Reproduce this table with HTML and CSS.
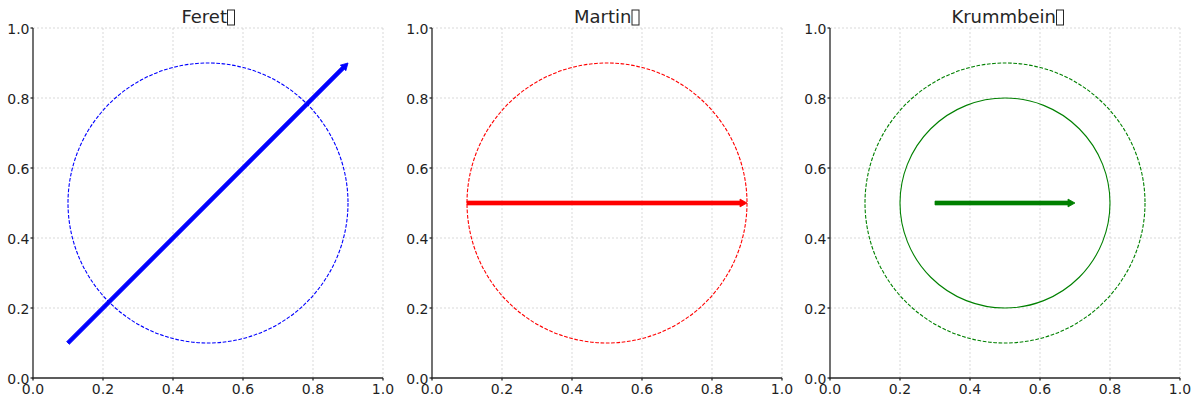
FILE: index.html
```html
<!DOCTYPE html>
<html>
<head>
<meta charset="utf-8">
<link rel="stylesheet" href="styles.css">
</head>
<body>
<div class="figure">
  <div class="panel">
    <svg class="plot" viewBox="0 0 398.5 404" width="398.5" height="404">
      <g class="grid">
        <line x1="103" y1="28" x2="103" y2="378"/><line x1="173" y1="28" x2="173" y2="378"/><line x1="243" y1="28" x2="243" y2="378"/><line x1="313" y1="28" x2="313" y2="378"/><line x1="383" y1="28" x2="383" y2="378"/>
        <line x1="33" y1="308" x2="383" y2="308"/><line x1="33" y1="238" x2="383" y2="238"/><line x1="33" y1="168" x2="383" y2="168"/><line x1="33" y1="98" x2="383" y2="98"/><line x1="33" y1="28" x2="383" y2="28"/>
      </g>
      <circle class="dash blue" cx="208" cy="203" r="140"/>
      <polygon class="fill-blue" transform="translate(68 343) rotate(-45)" points="0,-1.9 389,-1.9 389,-3.9 396,0 389,3.9 389,1.9 0,1.9"/>
      <g class="axes">
        <line x1="33" y1="28" x2="33" y2="378.6"/><line x1="32.4" y1="378" x2="383" y2="378"/>
        <line x1="30.5" y1="28" x2="33" y2="28"/><line x1="30.5" y1="98" x2="33" y2="98"/><line x1="30.5" y1="168" x2="33" y2="168"/><line x1="30.5" y1="238" x2="33" y2="238"/><line x1="30.5" y1="308" x2="33" y2="308"/><line x1="30.5" y1="378" x2="33" y2="378"/>
        <line x1="33" y1="378" x2="33" y2="380.5"/><line x1="103" y1="378" x2="103" y2="380.5"/><line x1="173" y1="378" x2="173" y2="380.5"/><line x1="243" y1="378" x2="243" y2="380.5"/><line x1="313" y1="378" x2="313" y2="380.5"/><line x1="383" y1="378" x2="383" y2="380.5"/>
      </g>
      <g class="ylab">
        <text x="29.5" y="33.5">1.0</text><text x="29.5" y="103.5">0.8</text><text x="29.5" y="173.5">0.6</text><text x="29.5" y="243.5">0.4</text><text x="29.5" y="313.5">0.2</text><text x="29.5" y="383.5">0.0</text>
      </g>
      <g class="xlab">
        <text x="33" y="394">0.0</text><text x="103" y="394">0.2</text><text x="173" y="394">0.4</text><text x="243" y="394">0.6</text><text x="313" y="394">0.8</text><text x="383" y="394">1.0</text>
      </g>
      <text class="title" x="227" y="22.5">Feret</text>
      <rect class="tofu" x="227.5" y="10" width="7" height="15"/>
    </svg>
  </div>
  <div class="panel">
    <svg class="plot" viewBox="0 0 398.5 404" width="398.5" height="404">
      <g class="grid">
        <line x1="103" y1="28" x2="103" y2="378"/><line x1="173" y1="28" x2="173" y2="378"/><line x1="243" y1="28" x2="243" y2="378"/><line x1="313" y1="28" x2="313" y2="378"/><line x1="383" y1="28" x2="383" y2="378"/>
        <line x1="33" y1="308" x2="383" y2="308"/><line x1="33" y1="238" x2="383" y2="238"/><line x1="33" y1="168" x2="383" y2="168"/><line x1="33" y1="98" x2="383" y2="98"/><line x1="33" y1="28" x2="383" y2="28"/>
      </g>
      <circle class="dash red" cx="208" cy="203" r="140"/>
      <polygon class="fill-red" transform="translate(68 203)" points="0,-1.9 273,-1.9 273,-3.9 280,0 273,3.9 273,1.9 0,1.9"/>
      <g class="axes">
        <line x1="33" y1="28" x2="33" y2="378.6"/><line x1="32.4" y1="378" x2="383" y2="378"/>
        <line x1="30.5" y1="28" x2="33" y2="28"/><line x1="30.5" y1="98" x2="33" y2="98"/><line x1="30.5" y1="168" x2="33" y2="168"/><line x1="30.5" y1="238" x2="33" y2="238"/><line x1="30.5" y1="308" x2="33" y2="308"/><line x1="30.5" y1="378" x2="33" y2="378"/>
        <line x1="33" y1="378" x2="33" y2="380.5"/><line x1="103" y1="378" x2="103" y2="380.5"/><line x1="173" y1="378" x2="173" y2="380.5"/><line x1="243" y1="378" x2="243" y2="380.5"/><line x1="313" y1="378" x2="313" y2="380.5"/><line x1="383" y1="378" x2="383" y2="380.5"/>
      </g>
      <g class="ylab">
        <text x="29.5" y="33.5">1.0</text><text x="29.5" y="103.5">0.8</text><text x="29.5" y="173.5">0.6</text><text x="29.5" y="243.5">0.4</text><text x="29.5" y="313.5">0.2</text><text x="29.5" y="383.5">0.0</text>
      </g>
      <g class="xlab">
        <text x="33" y="394">0.0</text><text x="103" y="394">0.2</text><text x="173" y="394">0.4</text><text x="243" y="394">0.6</text><text x="313" y="394">0.8</text><text x="383" y="394">1.0</text>
      </g>
      <text class="title" x="232.5" y="22.5">Martin</text>
      <rect class="tofu" x="233" y="10" width="7" height="15"/>
    </svg>
  </div>
  <div class="panel">
    <svg class="plot" viewBox="0 0 398.5 404" width="398.5" height="404">
      <g class="grid">
        <line x1="103" y1="28" x2="103" y2="378"/><line x1="173" y1="28" x2="173" y2="378"/><line x1="243" y1="28" x2="243" y2="378"/><line x1="313" y1="28" x2="313" y2="378"/><line x1="383" y1="28" x2="383" y2="378"/>
        <line x1="33" y1="308" x2="383" y2="308"/><line x1="33" y1="238" x2="383" y2="238"/><line x1="33" y1="168" x2="383" y2="168"/><line x1="33" y1="98" x2="383" y2="98"/><line x1="33" y1="28" x2="383" y2="28"/>
      </g>
      <circle class="dash green" cx="208" cy="203" r="140"/>
      <circle class="solid green" cx="208" cy="203" r="105"/>
      <polygon class="fill-green" transform="translate(138 203)" points="0,-1.9 133,-1.9 133,-3.9 140,0 133,3.9 133,1.9 0,1.9"/>
      <g class="axes">
        <line x1="33" y1="28" x2="33" y2="378.6"/><line x1="32.4" y1="378" x2="383" y2="378"/>
        <line x1="30.5" y1="28" x2="33" y2="28"/><line x1="30.5" y1="98" x2="33" y2="98"/><line x1="30.5" y1="168" x2="33" y2="168"/><line x1="30.5" y1="238" x2="33" y2="238"/><line x1="30.5" y1="308" x2="33" y2="308"/><line x1="30.5" y1="378" x2="33" y2="378"/>
        <line x1="33" y1="378" x2="33" y2="380.5"/><line x1="103" y1="378" x2="103" y2="380.5"/><line x1="173" y1="378" x2="173" y2="380.5"/><line x1="243" y1="378" x2="243" y2="380.5"/><line x1="313" y1="378" x2="313" y2="380.5"/><line x1="383" y1="378" x2="383" y2="380.5"/>
      </g>
      <g class="ylab">
        <text x="29.5" y="33.5">1.0</text><text x="29.5" y="103.5">0.8</text><text x="29.5" y="173.5">0.6</text><text x="29.5" y="243.5">0.4</text><text x="29.5" y="313.5">0.2</text><text x="29.5" y="383.5">0.0</text>
      </g>
      <g class="xlab">
        <text x="33" y="394">0.0</text><text x="103" y="394">0.2</text><text x="173" y="394">0.4</text><text x="243" y="394">0.6</text><text x="313" y="394">0.8</text><text x="383" y="394">1.0</text>
      </g>
      <text class="title" x="259" y="22.5">Krummbein</text>
      <rect class="tofu" x="259.5" y="10" width="7" height="15"/>
    </svg>
  </div>
</div>
</body>
</html>
```

FILE: styles.css
```css
html, body {
  margin: 0;
  padding: 0;
  background: #ffffff;
}
.figure {
  display: flex;
  width: 1200px;
  height: 404px;
  overflow: hidden;
}
.panel {
  flex: 0 0 398.5px;
  height: 404px;
}
.plot {
  display: block;
  font-family: "DejaVu Sans", "Liberation Sans", sans-serif;
}
.grid line {
  stroke: #cfcfcf;
  stroke-width: 0.8;
  stroke-dasharray: 2 2;
}
.axes line {
  stroke: #262626;
  stroke-width: 1.3;
}
.dash {
  fill: none;
  stroke-width: 1.1;
  stroke-dasharray: 3.7 1.6;
}
.solid {
  fill: none;
  stroke-width: 1.1;
}
.blue { stroke: #0000ff; }
.red { stroke: #ff0000; }
.green { stroke: #008000; }
.fill-blue { fill: #0000ff; stroke: #0000ff; stroke-width: 0.8; }
.fill-red { fill: #ff0000; stroke: #ff0000; stroke-width: 0.8; }
.fill-green { fill: #008000; stroke: #008000; stroke-width: 0.8; }
.ylab text {
  font-size: 14px;
  fill: #1f1f1f;
  text-anchor: end;
}
.xlab text {
  font-size: 14px;
  fill: #1f1f1f;
  text-anchor: middle;
}
.title {
  font-size: 18px;
  fill: #262626;
  text-anchor: end;
}
.tofu {
  fill: none;
  stroke: #262626;
  stroke-width: 1;
}
```
